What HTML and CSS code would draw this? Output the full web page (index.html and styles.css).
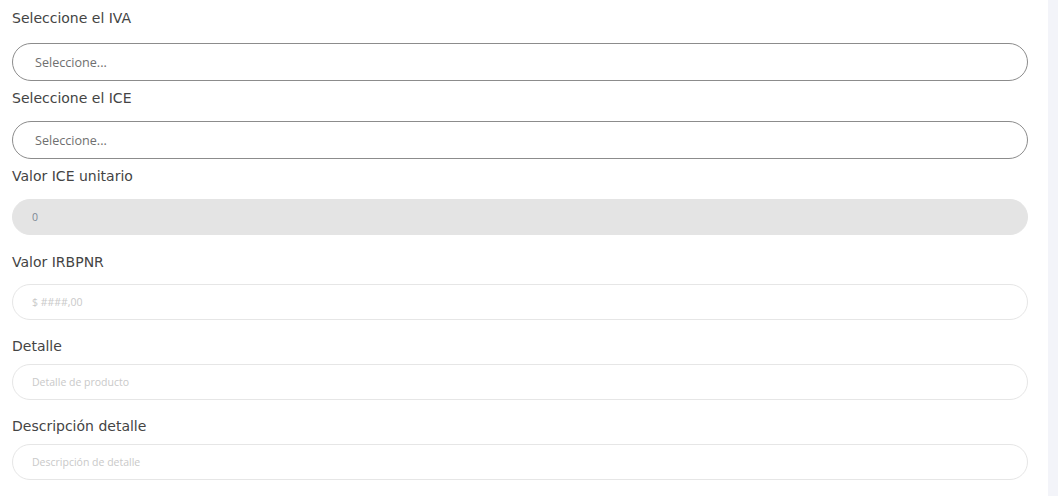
FILE: index.html
```html
<!DOCTYPE html>
<html lang="es">
<head>
  <meta charset="UTF-8">
  <title>Detalle de producto</title>
  <link rel="stylesheet" href="styles.css">
</head>
<body>
  <main class="formulario">
    <div class="campo primero">
      <label class="etiqueta">Seleccione el IVA</label>
      <select class="selector"><option>Seleccione...</option></select>
    </div>

    <div class="campo selec">
      <label class="etiqueta">Seleccione el ICE</label>
      <select class="selector"><option>Seleccione...</option></select>
    </div>

    <div class="campo selec">
      <label class="etiqueta">Valor ICE unitario</label>
      <input class="entrada bloqueada" type="text" value="0" readonly>
    </div>

    <div class="campo irbpnr">
      <label class="etiqueta">Valor IRBPNR</label>
      <input class="entrada" type="text" placeholder="$ ####,00">
    </div>

    <div class="campo">
      <label class="etiqueta">Detalle</label>
      <input class="entrada" type="text" placeholder="Detalle de producto">
    </div>

    <div class="campo">
      <label class="etiqueta">Descripción detalle</label>
      <input class="entrada" type="text" placeholder="Descripción de detalle">
    </div>
  </main>
</body>
</html>
```

FILE: styles.css
```css
body {
  margin: 0;
  background-color: #f3f4f9;
  font-family: 'DejaVu Sans', sans-serif;
}

.formulario {
  width: 1048px;
  height: 496px;
  box-sizing: border-box;
  background-color: white;
  padding: 8px 20px 0 12px;
  display: flex;
  flex-direction: column;
}

.campo {
  display: flex;
  flex-direction: column;
  margin-top: 16px;
}

.etiqueta {
  font-size: 14px;
  line-height: 20px;
  color: #444;
  margin-bottom: 8px;
}

.primero {
  margin-top: 0;
}

.primero .etiqueta {
  margin-bottom: 15px;
}

.selec {
  margin-top: 7px;
}

.selec .etiqueta {
  margin-bottom: 13px;
}

.irbpnr {
  margin-top: 17px;
}

.irbpnr .etiqueta {
  margin-bottom: 12px;
}

.selector {
  appearance: none;
  -webkit-appearance: none;
  height: 38px;
  border: 1px solid #8c8c8c;
  border-radius: 19px;
  background-color: white;
  padding: 0 22px;
  font-family: 'Open Sans', sans-serif;
  font-size: 12.6px;
  color: #6f6f6f;
  outline: none;
}

.entrada {
  height: 36px;
  box-sizing: border-box;
  border: 1px solid #e6e6e6;
  border-radius: 18px;
  background-color: white;
  padding: 0 19px;
  font-family: 'Open Sans', sans-serif;
  font-size: 10.5px;
  color: #6f6f6f;
  outline: none;
}

.entrada::placeholder {
  color: #c9c9c9;
}

.bloqueada {
  background-color: #e4e4e4;
  border-color: #e4e4e4;
  color: #7d8794;
}
```
